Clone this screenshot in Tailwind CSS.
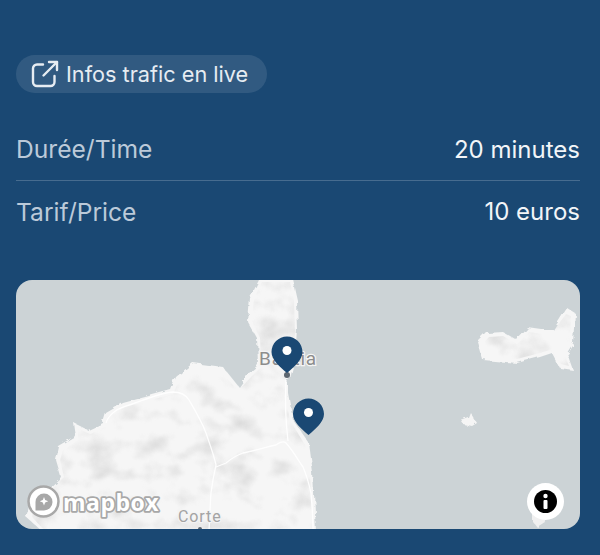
<!DOCTYPE html>
<html lang="en">
<head>
    <meta charset="UTF-8">
    <title>Infos trajet</title>
    <script src="https://cdn.jsdelivr.net/npm/@tailwindcss/browser@4"></script>
</head>
<body class="bg-[#1a4873] h-[555px] w-[600px] overflow-hidden font-['Inter',sans-serif]">
    <div class="pl-4 pr-5 pt-[55px]">
        <!-- Live traffic link -->
        <a class="inline-flex items-center h-[38px] w-[251px] pl-[14px] rounded-full bg-white/10 text-[#e6ecf2] text-[21.700px] gap-[6px]">
            <svg class="w-[30px] h-[30px] shrink-0" viewBox="0 0 30 30" fill="none" stroke="currentColor" stroke-width="2.400" stroke-linecap="round" stroke-linejoin="round">
                <path d="M13 5.500H7a4 4 0 0 0-4 4V23a4 4 0 0 0 4 4h13.500a4 4 0 0 0 4-4v-6"/>
                <path d="M19 3h8v8"/>
                <path d="M27 3 13.500 16.500"/>
            </svg>
            <span>Infos trafic en live</span>
        </a>

        <!-- Time and price -->
        <div class="mt-[24px]">
            <div class="flex items-center justify-between h-[62px] border-b border-white/20">
                <span class="text-[24.600px] text-[#bccad9]">Durée/Time</span>
                <span class="text-[24px] text-[#f2f5f8]">20 minutes</span>
            </div>
            <div class="flex items-center justify-between h-[62px]">
                <span class="text-[24.600px] text-[#bccad9]">Tarif/Price</span>
                <span class="text-[24px] text-[#f2f5f8]">10 euros</span>
            </div>
        </div>

        <!-- Map -->
        <div class="relative mt-[37px] h-[249px] rounded-[16px] overflow-hidden bg-[#ccd3d6]">
            <svg class="w-full h-full block" viewBox="0 0 564 249">
                <defs>
                    <filter id="soft" x="-5%" y="-5%" width="110%" height="110%">
                        <feTurbulence type="fractalNoise" baseFrequency="0.09" numOctaves="3" seed="4" result="noise"/>
                        <feDisplacementMap in="SourceGraphic" in2="noise" scale="7"/>
                        <feGaussianBlur stdDeviation="0.700"/>
                    </filter>
                    <filter id="relief" x="0" y="0" width="100%" height="100%" color-interpolation-filters="sRGB">
                        <feTurbulence type="fractalNoise" baseFrequency="0.035 0.05" numOctaves="4" seed="3"/>
                        <feColorMatrix values="0 0 0 0 0.85  0 0 0 0 0.85  0 0 0 0 0.85  2.200 0 0 0 -1.050"/>
                        <feGaussianBlur stdDeviation="1"/>
                    </filter>
                    <clipPath id="land">
                        <path d="M262 282 290 282 294 300 295 330 294 345 285 382 285 393 290 420 305 445 310 473 313 532H46L32 517 34 507 64 477 60 460 63 450 78 440 78 428 90 434 105 427 109 416 125 407 173 394 179 380 195 367 221 371 238 391 251 377 261 367 260 338 252 322 254 298Z"/>
                        <path d="M482 344 489 337 503 336 517 344 529 332 542 334 551 334 566 314 571 316 570 342 564 353 569 366 561 364 550 350 540 353 517 359 485 357Z"/>
                    </clipPath>
                </defs>
                <g transform="translate(-16 -280)">
                    <!-- Corsica -->
                    <path filter="url(#soft)" fill="#f6f6f6" d="M260 278 292 278 297 300 298 330 297 345 288 382 288 393 293 420 309 443 313 473 316 532H43L26 517 29 507 61 477 56 460 59 447 76 437 74 423 88 430 103 423 106 413 123 403 171 390 176 377 193 363 223 367 239 387 249 373 258 365 257 338 248 322 250 298Z"/>
                    <!-- Elba -->
                    <path filter="url(#soft)" fill="#f6f6f6" d="M478 342 487 333 503 332 517 340 528 328 542 330 553 330 567 308 575 313 573 343 567 353 573 370 560 368 552 353 540 357 517 363 483 360Z"/>
                    <!-- Hillshade -->
                    <g clip-path="url(#land)">
                        <rect x="16" y="280" width="564" height="249" filter="url(#relief)"/>
                    </g>
                    <!-- Roads -->
                    <g fill="none" stroke="#ffffff" stroke-width="1.300" opacity="0.9">
                        <path d="M106 423C108 416 116 409 123 407 140 402 158 393 173 392 181 392 186 395 189 400 196 412 202 422 206 433 210 445 214 455 216 465 213 478 212 485 211 493 210 505 210 516 209 530"/>
                        <path d="M216 467 226 463C232 458 237 455 243 453 254 451 266 447 276 445 280 442 284 441 286 443 294 452 298 460 303 467 307 476 309 484 311 493 312 505 313 518 313 530"/>
                        <path d="M286 380C285 400 286 425 288 441"/>
                    </g>
                    <!-- Small islands -->
                    <path filter="url(#soft)" fill="#f5f5f5" d="M461 421 469 418 471 413 477 423 472 426 463 424Z"/>
                    <path filter="url(#soft)" fill="#f0f0f0" d="M533 512 542 514 545 522 537 527 533 522Z"/>
                    <!-- Place labels -->
                    <text x="259" y="365" font-family="Roboto, sans-serif" font-size="19" letter-spacing="0.800" fill="#8d8d8d" stroke="#f4f4f4" stroke-width="2.500" paint-order="stroke">Bastia</text>
                    <text x="178" y="522" font-family="Roboto, sans-serif" font-size="16" letter-spacing="0.900" fill="#a3a3a3" stroke="#f4f4f4" stroke-width="2" paint-order="stroke">Corte</text>
                    <circle cx="287" cy="375" r="3" fill="#5c6670"/>
                    <circle cx="200" cy="529" r="2" fill="#5c6670"/>
                    <!-- Pins -->
                    <path fill="#1a4873" d="M287 336.500C278.500 336.500 271.500 343.500 271.500 352 271.500 360 280 367 287 373 294 367 302.500 360 302.500 352 302.500 343.500 295.500 336.500 287 336.500Z"/>
                    <circle cx="287" cy="350.500" r="4.500" fill="#fff"/>
                    <path fill="#1a4873" d="M308.500 398.500C300 398.500 293 405.500 293 414 293 422 301.500 429 308.500 435 315.500 429 324 422 324 414 324 405.500 317 398.500 308.500 398.500Z"/>
                    <circle cx="308.500" cy="412.500" r="4.500" fill="#fff"/>
                </g>
            </svg>

            <!-- Mapbox logo -->
            <div class="absolute left-[10px] bottom-[10px] flex items-center">
                <svg class="w-[35px] h-[35px]" viewBox="0 0 35 35">
                    <circle cx="17.500" cy="17.500" r="15" fill="#fff" stroke="#a8a8a8" stroke-width="2.500"/>
                    <path fill="#a8a8a8" d="M18 9.500a8.500 8.500 0 0 1 0 17H9.500V18A8.500 8.500 0 0 1 18 9.500Z"/>
                    <path fill="#fff" d="M18 13l1.200 3 3 1.200-3 1.200-1.200 3-1.200-3-3-1.200 3-1.200Z"/>
                </svg>
                <svg class="w-[110px] h-[34px]" viewBox="0 0 110 34">
                    <text x="2" y="26" font-family="'Open Sans', sans-serif" font-weight="700" font-size="23" fill="#fff" stroke="#a8a8a8" stroke-width="3.500" paint-order="stroke" stroke-linejoin="round" letter-spacing="0.500">mapbox</text>
                </svg>
            </div>

            <!-- Attribution button -->
            <div class="absolute right-[16px] bottom-[9px] w-[37px] h-[37px] rounded-full bg-white flex items-center justify-center">
                <svg class="w-[23px] h-[23px]" viewBox="0 0 23 23">
                    <circle cx="11.500" cy="11.500" r="11.500" fill="#000"/>
                    <circle cx="11.500" cy="6" r="2.200" fill="#fff"/>
                    <rect x="9.500" y="10" width="4" height="9" rx="1" fill="#fff"/>
                </svg>
            </div>
        </div>
    </div>
</body>
</html>
